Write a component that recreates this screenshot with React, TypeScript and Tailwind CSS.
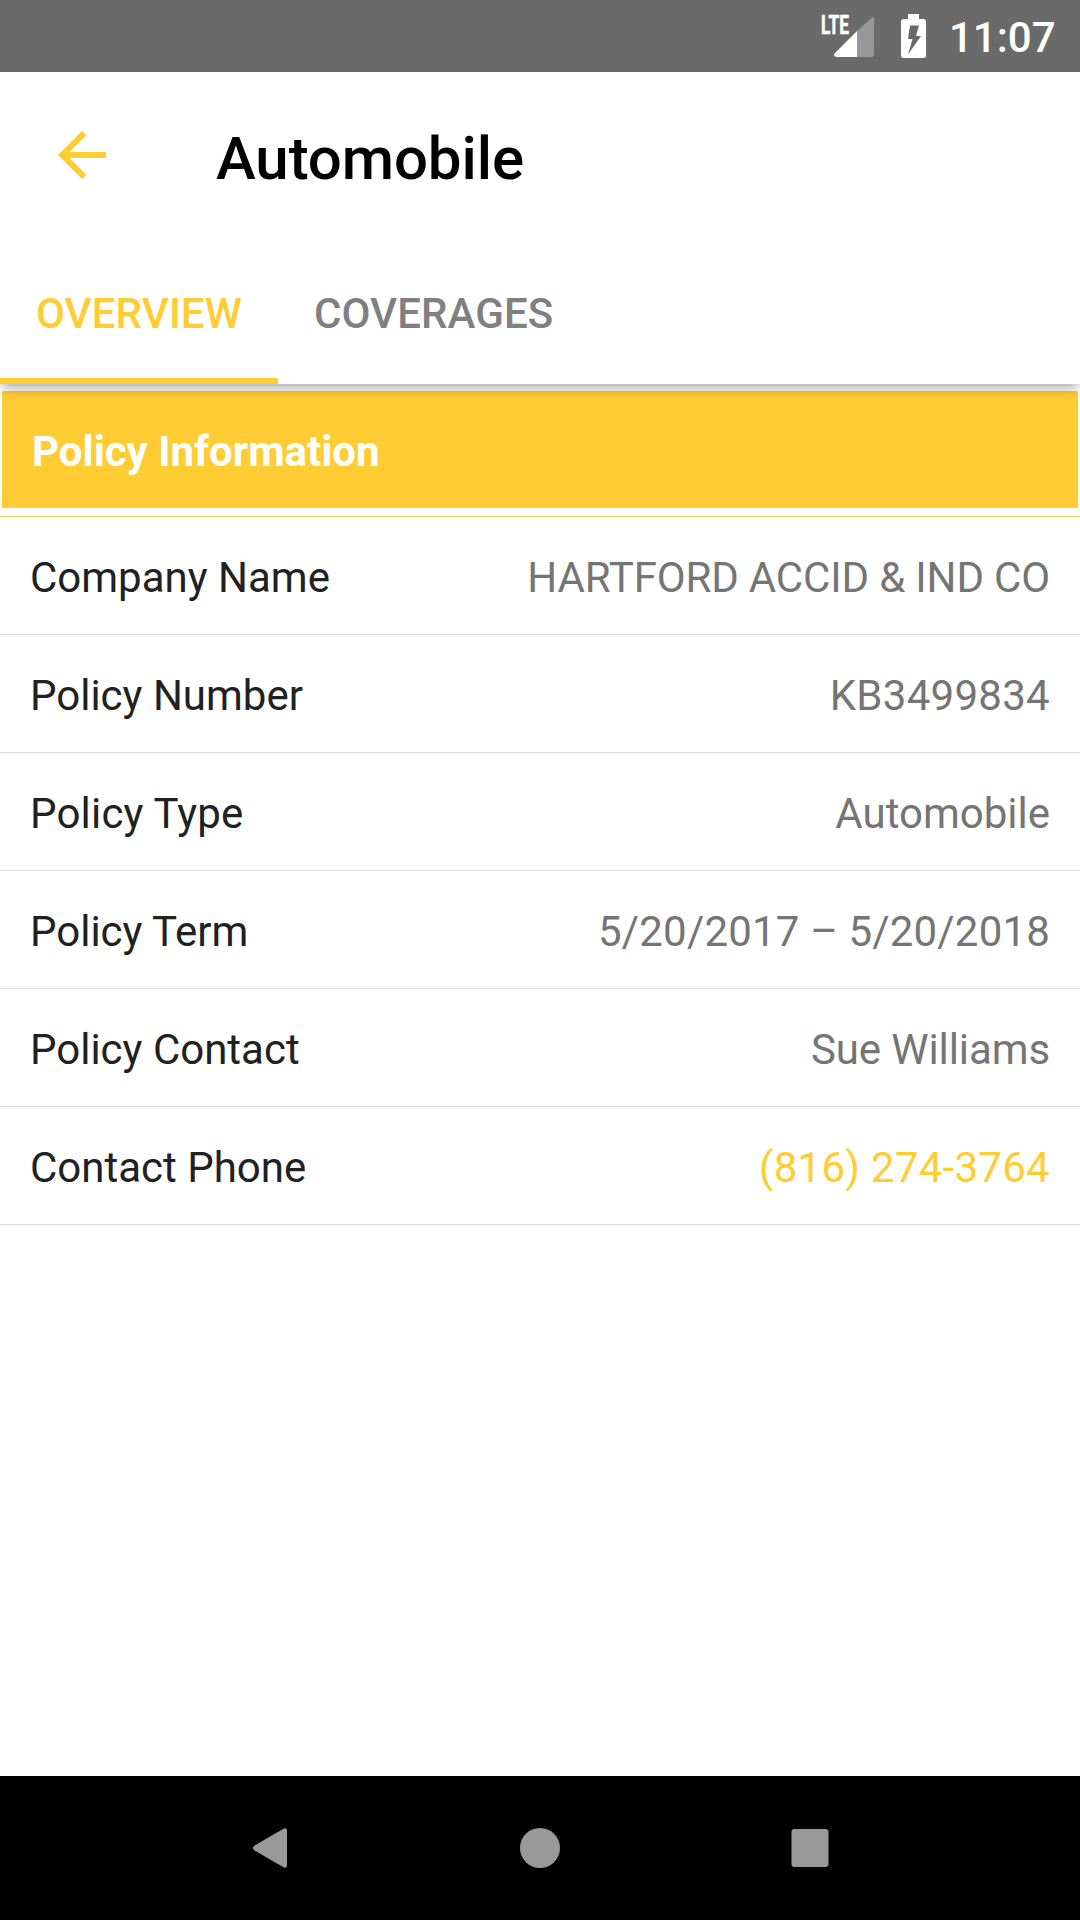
import { useState } from "react";
import clsx from "clsx";

const TABS = [
    { name: "Overview", width: "w-[278px]" },
    { name: "Coverages", width: "w-[312px]" },
];

const policyInfo = [
    { label: "Company Name", value: "HARTFORD ACCID & IND CO", tracking: "tracking-[-0.16px]" },
    { label: "Policy Number", value: "KB3499834", tracking: "tracking-[0.28px]" },
    { label: "Policy Type", value: "Automobile", labelTracking: "tracking-[0.2px]" },
    { label: "Policy Term", value: "5/20/2017 – 5/20/2018", tracking: "tracking-[0.18px]" },
    { label: "Policy Contact", value: "Sue Williams", tracking: "tracking-[-0.1px]" },
    { label: "Contact Phone", value: "(816) 274-3764", tracking: "tracking-[0.28px]", phone: true },
];

const StatusBar = () => (
    <div className="relative z-20 h-[72px] bg-[#6a6a6a] flex">
        {/* Signal + battery */}
        <svg className="ml-[816px] w-[120px] h-[72px]" viewBox="816 0 120 72">
            <text
                x="821"
                y="33.5"
                fill="#fff"
                stroke="#fff"
                strokeWidth="0.5"
                fontSize="26"
                fontWeight="700"
                textLength="28"
                lengthAdjust="spacingAndGlyphs"
            >
                LTE
            </text>
            <path d="M857 31L872 17.500Q874 16 874 19V54Q874 57 871 57H857Z" fill="#979797" />
            <path d="M857 31V57H837Q832 56 835 53Z" fill="#fff" />
            <path
                d="M908 14H919V19H923.500Q926 19 926 21.500V55.500Q926 58 923.500 58H903.500Q901 58 901 55.500V21.500Q901 19 903.500 19H908Z"
                fill="#fff"
            />
            <path d="M910 25.500H919L916 36H921L908 54.500L912.500 39H908Z" fill="#6a6a6a" />
        </svg>
        <span className="ml-[13px] pt-[2px] text-[42px] leading-[72px] font-medium text-white">11:07</span>
    </div>
);

const NavBar = () => (
    <div className="h-36 bg-black flex">
        <svg className="w-full h-full" viewBox="0 0 1080 144" fill="#999">
            <path d="M254.500 69.500L283.500 52.800Q287 51 287 55V89Q287 93 283.500 91.200L254.500 74.500Q251.500 72 254.500 69.500Z" />
            <circle cx="540" cy="72" r="20" />
            <rect x="791.5" y="53" width="37" height="38" rx="3" />
        </svg>
    </div>
);

export default function App() {
    const [activeTab, setActiveTab] = useState("Overview");

    return (
        <div className="w-[1080px] h-[1920px] flex flex-col bg-white overflow-hidden font-[Roboto,sans-serif]">
            <StatusBar />

            {/* Header */}
            <header className="relative z-10 h-[312px] bg-white shadow-[0_6px_12px_-2px_rgba(0,0,0,0.34)] flex flex-col justify-between">
                <div className="h-[166px] flex items-center pl-[46px]">
                    <button type="button" aria-label="Back">
                        <svg className="w-[72px] h-[72px]" viewBox="0 0 24 24" fill="#ffcc33">
                            <path d="M20 11H7.830l5.590-5.590L12 4l-8 8 8 8 1.410-1.410L7.830 13H20v-2z" />
                        </svg>
                    </button>
                    <h1 className="ml-[98px] pt-2 text-[60px] leading-[72px] font-medium tracking-[-0.1px] text-black">
                        Automobile
                    </h1>
                </div>

                {/* Tabs */}
                <div className="h-36 flex">
                    {TABS.map((tab) => (
                        <button
                            key={tab.name}
                            type="button"
                            onClick={() => setActiveTab(tab.name)}
                            className={clsx(
                                "h-full pl-9 pt-2 border-b-[6px] text-left text-[42px] font-medium tracking-[0.08px] uppercase",
                                tab.width,
                                activeTab === tab.name
                                    ? "border-[#ffcc33] text-[#ffcc33]"
                                    : "border-transparent text-[#808080]"
                            )}
                        >
                            {tab.name}
                        </button>
                    ))}
                </div>
            </header>

            {/* Policy information */}
            <main className="flex-1 pt-[7px]">
                <h2 className="mx-[2px] h-[117px] pt-[2px] px-[30px] bg-[#ffcc33] text-white text-[42px] leading-[117px] font-bold">
                    Policy Information
                </h2>
                <dl className="mt-2 border-t border-[#e6d56a]">
                    {policyInfo.map((item) => (
                        <div
                            key={item.label}
                            className="h-[118px] px-[30px] pt-[3px] border-b border-[#dcdcdc] flex items-center justify-between text-[42px]"
                        >
                            <dt className={clsx("text-[#212121]", item.labelTracking)}>{item.label}</dt>
                            <dd className={clsx(item.tracking, item.phone ? "text-[#ffcc33]" : "text-[#757575]")}>
                                {item.value}
                            </dd>
                        </div>
                    ))}
                </dl>
            </main>

            <NavBar />
        </div>
    );
}
